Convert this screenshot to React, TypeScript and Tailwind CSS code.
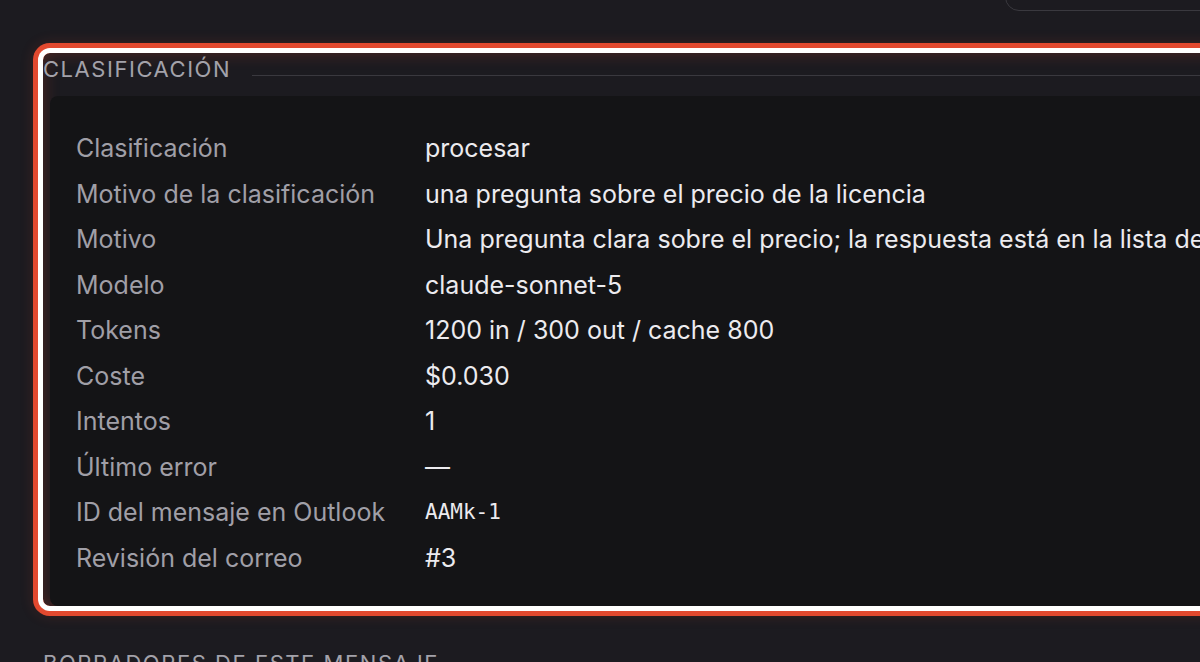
import React from 'react';

const rows: { label: string; value: string; mono?: boolean }[] = [
  { label: 'Clasificación', value: 'procesar' },
  { label: 'Motivo de la clasificación', value: 'una pregunta sobre el precio de la licencia' },
  { label: 'Motivo', value: 'Una pregunta clara sobre el precio; la respuesta está en la lista de precios vigente.' },
  { label: 'Modelo', value: 'claude-sonnet-5' },
  { label: 'Tokens', value: '1200 in / 300 out / cache 800' },
  { label: 'Coste', value: '$0.030' },
  { label: 'Intentos', value: '1' },
  { label: 'Último error', value: '—' },
  { label: 'ID del mensaje en Outlook', value: 'AAMk-1', mono: true },
  { label: 'Revisión del correo', value: '#3' },
];

const App: React.FC = () => {
  return (
    <div className="w-[1200px] h-[662px] overflow-hidden bg-[#1c1b20] font-['Inter','Noto_Sans',sans-serif]">
      {/* bottom edge of the box above */}
      <div className="flex h-[12px] pl-[1005px]">
        <div className="w-[300px] h-[60px] -mt-[49px] shrink-0 border border-[#3a393f] rounded-[14px]" />
      </div>

      <section className="ml-[43px] mt-[41px] w-[1300px] rounded-[7px] shadow-[0_0_0_5px_#ffffff,0_0_0_10px_#e2492f,0_0_14px_10px_rgba(226,73,47,0.15),inset_0_0_16px_rgba(226,73,47,0.28)]">
        <div className="flex items-end gap-[21px] pt-[2px]">
          <h2 className="text-[22px] leading-[28px] tracking-[0.07em] text-[#a3a2aa] uppercase">Clasificación</h2>
          <div className="flex-1 h-px bg-[#3a393f] mb-[7px]" />
        </div>
        <div className="ml-[7px] mt-[13px] rounded-[8px] bg-[#141416] pl-[26px] pt-[30px] pb-[25px]">
          {rows.map((r) => (
            <div key={r.label} className="flex items-center h-[45.5px] text-[25px] whitespace-nowrap">
              <div className="w-[349px] shrink-0 text-[#a09fa7]">{r.label}</div>
              <div
                className={
                  r.mono
                    ? "text-[#ecebef] text-[21px] font-['DejaVu_Sans_Mono','Liberation_Mono',monospace]"
                    : 'text-[#ecebef]'
                }
              >
                {r.value}
              </div>
            </div>
          ))}
        </div>
      </section>

      <h2 className="ml-[43px] mt-[43px] text-[22px] leading-[28px] tracking-[0.07em] text-[#a3a2aa] uppercase">
        Borradores de este mensaje
      </h2>
    </div>
  );
};

export default App;
